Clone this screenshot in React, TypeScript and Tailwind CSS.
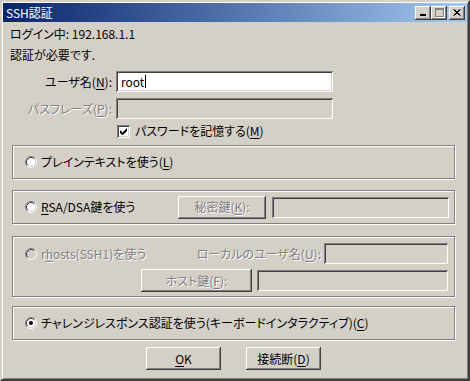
import type { ReactNode } from "react";
import clsx from "clsx";

const RAISED =
  "shadow-[inset_-1px_-1px_#404040,inset_1px_1px_#ffffff,inset_-2px_-2px_#808080,inset_2px_2px_#d4d0c8]";
const SUNKEN =
  "shadow-[inset_1px_1px_#808080,inset_-1px_-1px_#ffffff,inset_2px_2px_#404040,inset_-2px_-2px_#d4d0c8]";
const ETCHED = "border border-[#808080] shadow-[inset_1px_1px_#ffffff,1px_1px_#ffffff]";
const DIM = "text-[#808080] [text-shadow:1px_1px_#ffffff]";

function U({ children }: { children: ReactNode }) {
  return <span className="underline underline-offset-[2px]">{children}</span>;
}

function Field({ className, value, disabled }: { className: string; value?: string; disabled?: boolean }) {
  return (
    <div className={clsx(SUNKEN, "flex items-center pl-[5px]", disabled ? "bg-[#d4d0c8]" : "bg-white", className)}>
      {value && (
        <>
          <span>{value}</span>
          <span className="ml-[1px] h-[13px] w-px bg-black" />
        </>
      )}
    </div>
  );
}

function Button({ className, children, disabled }: { className: string; children: ReactNode; disabled?: boolean }) {
  return (
    <div className={clsx(RAISED, "flex items-center justify-center bg-[#d4d0c8]", disabled && DIM, className)}>
      {children}
    </div>
  );
}

function Radio({ checked, disabled }: { checked?: boolean; disabled?: boolean }) {
  return (
    <svg width="12" height="12" viewBox="0 0 12 12" className="shrink-0">
      <circle cx="6" cy="6" r="4.5" fill={disabled ? "#d4d0c8" : "#ffffff"} />
      <path d="M2.11 9.89A5.5 5.5 0 0 1 9.89 2.11" fill="none" stroke="#808080" />
      <path d="M9.89 2.11A5.5 5.5 0 0 1 2.11 9.89" fill="none" stroke="#ffffff" />
      <path d="M2.82 9.18A4.5 4.5 0 0 1 9.18 2.82" fill="none" stroke="#404040" />
      <path d="M9.18 2.82A4.5 4.5 0 0 1 2.82 9.18" fill="none" stroke="#d4d0c8" />
      {checked && <circle cx="6" cy="6" r="2" fill="#000000" />}
    </svg>
  );
}

function CaptionButton({ children, className }: { children: ReactNode; className?: string }) {
  return (
    <div className={clsx(RAISED, "flex h-[14px] w-[16px] items-center justify-center bg-[#d4d0c8]", className)}>
      {children}
    </div>
  );
}

export default function App() {
  return (
    <div className="h-[381px] w-[470px] overflow-hidden border-2 border-t-[#d4d0c8] border-l-[#d4d0c8] border-r-[#404040] border-b-[#404040] bg-[#d4d0c8] p-px font-['Noto_Sans_CJK_JP','Noto_Sans_CJK_SC',sans-serif] text-[12px] leading-[14px] text-black shadow-[inset_1px_1px_#ffffff,inset_-1px_-1px_#808080] [font-feature-settings:'palt']">
      {/* title bar */}
      <div className="flex h-[19px] items-center bg-gradient-to-r from-[#0a246a] to-[#a6caf0] pl-[3px] pr-[2px]">
        <span className="text-white">SSH認証</span>
        <div className="ml-auto flex items-center">
          <CaptionButton>
            <span className="mt-[5px] h-[2px] w-[6px] bg-black" />
          </CaptionButton>
          <CaptionButton>
            <span className="h-[9px] w-[9px] border border-t-2 border-[#808080] shadow-[1px_1px_#ffffff]" />
          </CaptionButton>
          <CaptionButton className="ml-[2px]">
            <svg width="8" height="7" viewBox="0 0 8 7">
              <path d="M0.5 0.5L6.5 6.5M1.5 0.5L7.5 6.5M6.5 0.5L0.5 6.5M7.5 0.5L1.5 6.5" stroke="#000" strokeWidth="1" />
            </svg>
          </CaptionButton>
        </div>
      </div>

      <div className="flex flex-col">
        <p className="mt-[5px] pl-[7px]">ログイン中: 192.168.1.1</p>
        <p className="mt-[7px] pl-[7px]">認証が必要です.</p>

        <div className="mt-[9px] flex items-center">
          <span className="w-[109px] text-right">
            ユーザ名(<U>N</U>):
          </span>
          <Field className="ml-[4px] h-[21px] w-[217px]" value="root" />
        </div>
        <div className="mt-[6px] flex items-center">
          <span className={clsx("w-[109px] text-right", DIM)}>
            パスフレーズ(<U>P</U>):
          </span>
          <Field className="ml-[4px] h-[21px] w-[217px]" disabled />
        </div>
        <div className="mt-[5px] flex items-center pl-[114px]">
          <div className={clsx(SUNKEN, "flex h-[13px] w-[13px] items-center justify-center bg-white")}>
            <svg width="7" height="7" viewBox="0 0 7 7">
              <path d="M0 2v3l2 2h1l4-4V0L2.5 4.5z" fill="#000" />
            </svg>
          </div>
          <span className="ml-[5px]">
            パスワードを記憶する(<U>M</U>)
          </span>
        </div>

        <div className={clsx(ETCHED, "ml-[9px] mt-[7px] flex h-[34px] w-[443px] items-center pl-[12px]")}>
          <Radio />
          <span className="ml-[4px]">
            プレインテキストを使う(<U>L</U>)
          </span>
        </div>

        <div className={clsx(ETCHED, "ml-[9px] mt-[11px] flex h-[34px] w-[443px] items-center pl-[12px]")}>
          <div className="flex w-[153px] items-center">
            <Radio />
            <span className="ml-[4px]">
              <U>R</U>SA/DSA鍵を使う
            </span>
          </div>
          <Button className="h-[23px] w-[88px]" disabled>
            秘密鍵(<U>K</U>):
          </Button>
          <Field className="ml-[6px] h-[21px] w-[177px]" disabled />
        </div>

        <div className={clsx(ETCHED, "ml-[9px] mt-[12px] flex h-[61px] w-[443px] flex-col pl-[12px] pr-[6px] pt-[6px]")}>
          <div className="flex h-[21px] items-center">
            <Radio disabled />
            <span className={clsx("ml-[4px]", DIM)}>
              r<U>h</U>osts(SSH1)を使う
            </span>
            <span className={clsx("ml-auto", DIM)}>
              ローカルのユーザ名(<U>U</U>):
            </span>
            <Field className="ml-[3px] h-[21px] w-[124px]" disabled />
          </div>
          <div className="mt-[5px] flex h-[23px] items-center">
            <Button className="ml-[116px] h-[23px] w-[111px]" disabled>
              ホスト鍵(<U>F</U>):
            </Button>
            <Field className="ml-[5px] h-[21px] w-[191px]" disabled />
          </div>
        </div>

        <div className={clsx(ETCHED, "ml-[9px] mt-[9px] flex h-[34px] w-[443px] items-center pl-[12px]")}>
          <Radio checked />
          <span className="ml-[4px]">
            チャレンジレスポンス認証を使う(キーボードインタラクティブ)(<U>C</U>)
          </span>
        </div>

        <div className="ml-[143px] mt-[7px] flex gap-[25px]">
          <Button className="h-[23px] w-[75px]">
            <U>O</U>K
          </Button>
          <Button className="h-[23px] w-[75px]">
            接続断(<U>D</U>)
          </Button>
        </div>
      </div>
    </div>
  );
}
